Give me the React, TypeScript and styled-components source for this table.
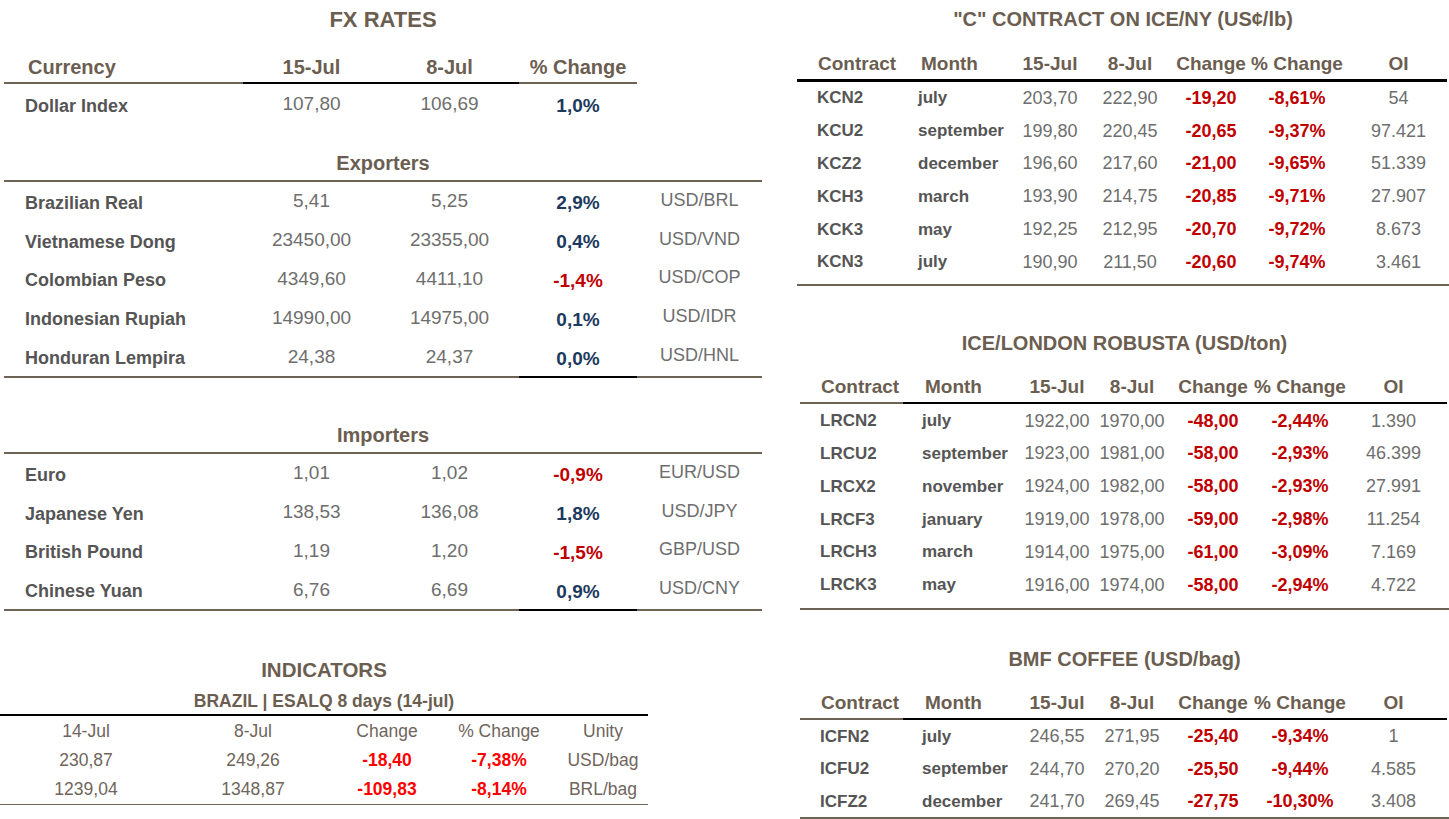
import styled, { createGlobalStyle } from "styled-components";

const BROWN = "#6b5e51";
const INK = "#555555";
const GREY = "#6e6e6e";
const RED = "#c00000";
const BRIGHT_RED = "#ff0000";
const NAVY = "#1c3a5e";
const LINE = "#6f6356";

const GlobalStyle = createGlobalStyle`
  html, body { margin: 0; padding: 0; background: #ffffff; }
  body { font-family: "Liberation Sans", Arial, sans-serif; }
`;

const Page = styled.div`
  display: flex;
  width: 1449px;
  height: 819px;
  overflow: hidden;
`;

const LeftCol = styled.div`
  width: 770px;
  flex: none;
  display: flex;
  flex-direction: column;
`;

const RightCol = styled.div`
  width: 652px;
  margin-left: 27px;
  flex: none;
  display: flex;
  flex-direction: column;
`;

const Title = styled.div<{ $h: number; $mt?: number; $size?: number }>`
  height: ${(p) => p.$h}px;
  line-height: ${(p) => p.$h}px;
  margin-top: ${(p) => p.$mt ?? 0}px;
  text-align: center;
  font-weight: 700;
  font-size: ${(p) => p.$size ?? 20}px;
  color: ${BROWN};
  white-space: nowrap;
`;

const SectionTitle = styled(Title)`
  border-bottom: 2px solid ${LINE};
`;

const Rule = styled.div`
  display: flex;
`;

const Seg = styled.div<{ $w: number; $c: string; $t?: number }>`
  flex: none;
  width: ${(p) => p.$w}px;
  height: ${(p) => p.$t ?? 2}px;
  background: ${(p) => p.$c};
`;

/* ---------- FX ---------- */

const FxBlock = styled.div`
  margin-left: 4px;
  width: 758px;
  display: flex;
  flex-direction: column;
`;

const FxRow = styled.div<{ $h: number; $pt?: number; $mt?: number }>`
  display: grid;
  grid-template-columns: 239px 137px 139px 118px 125px;
  box-sizing: border-box;
  height: ${(p) => p.$h}px;
  padding-top: ${(p) => p.$pt ?? 0}px;
  margin-top: ${(p) => p.$mt ?? 0}px;
  align-items: center;
`;

const Cell = styled.div<{ $left?: boolean; $pl?: number; $up?: number }>`
  display: flex;
  justify-content: ${(p) => (p.$left ? "flex-start" : "center")};
  padding-left: ${(p) => p.$pl ?? 0}px;
  padding-bottom: ${(p) => p.$up ?? 0}px;
  min-width: 0;
  white-space: nowrap;
`;

const HeadCell = styled(Cell)<{ $size?: number }>`
  font-weight: 700;
  font-size: ${(p) => p.$size ?? 20}px;
  color: ${BROWN};
`;

const NameCell = styled(Cell)`
  font-weight: 700;
  font-size: 18px;
  color: ${INK};
`;

const NumCell = styled(Cell)<{ $size?: number }>`
  font-size: ${(p) => p.$size ?? 19}px;
  color: ${GREY};
`;

const PctCell = styled(Cell)<{ $neg: boolean }>`
  font-weight: 700;
  font-size: 19px;
  color: ${(p) => (p.$neg ? RED : NAVY)};
`;

const PairCell = styled(Cell)`
  font-size: 18px;
  color: ${GREY};
`;

type Fx = [string, string, string, string, string?];

const dollar: Fx = ["Dollar Index", "107,80", "106,69", "1,0%"];

const exporters: Fx[] = [
  ["Brazilian Real", "5,41", "5,25", "2,9%", "USD/BRL"],
  ["Vietnamese Dong", "23450,00", "23355,00", "0,4%", "USD/VND"],
  ["Colombian Peso", "4349,60", "4411,10", "-1,4%", "USD/COP"],
  ["Indonesian Rupiah", "14990,00", "14975,00", "0,1%", "USD/IDR"],
  ["Honduran Lempira", "24,38", "24,37", "0,0%", "USD/HNL"],
];

const importers: Fx[] = [
  ["Euro", "1,01", "1,02", "-0,9%", "EUR/USD"],
  ["Japanese Yen", "138,53", "136,08", "1,8%", "USD/JPY"],
  ["British Pound", "1,19", "1,20", "-1,5%", "GBP/USD"],
  ["Chinese Yuan", "6,76", "6,69", "0,9%", "USD/CNY"],
];

function FxLine({ row, h, pt }: { row: Fx; h: number; pt?: number }) {
  return (
    <FxRow $h={h} $pt={pt}>
      <NameCell $left $pl={21}>{row[0]}</NameCell>
      <NumCell $up={4}>{row[1]}</NumCell>
      <NumCell $up={4}>{row[2]}</NumCell>
      <PctCell $neg={row[3].startsWith("-")}>{row[3]}</PctCell>
      {row[4] ? <PairCell $up={6}>{row[4]}</PairCell> : <span />}
    </FxRow>
  );
}

function SectionRule() {
  return (
    <Rule>
      <Seg $w={515} $c={LINE} />
      <Seg $w={118} $c="#000" />
      <Seg $w={125} $c={LINE} />
    </Rule>
  );
}

/* ---------- Indicators ---------- */

const IndBlock = styled.div`
  width: 648px;
  display: flex;
  flex-direction: column;
`;

const SubTitle = styled.div`
  height: 25px;
  line-height: 25px;
  text-align: center;
  font-weight: 700;
  font-size: 17.5px;
  color: ${BROWN};
  border-bottom: 2px solid #000;
`;

const IndRow = styled.div<{ $h: number; $last?: boolean }>`
  display: grid;
  grid-template-columns: 172px 162px 106px 118px 90px;
  height: ${(p) => p.$h}px;
  align-items: center;
  border-bottom: ${(p) => (p.$last ? `1.5px solid ${LINE}` : "none")};
`;

const IndHead = styled(Cell)`
  font-size: 17.5px;
  color: #6f655c;
`;

const IndRed = styled(Cell)`
  font-weight: 700;
  font-size: 17.5px;
  color: ${BRIGHT_RED};
`;

/* ---------- Contracts ---------- */

const TableBlock = styled.div<{ $ml?: number; $mt: number }>`
  margin-left: ${(p) => p.$ml ?? 0}px;
  margin-top: ${(p) => p.$mt}px;
  display: flex;
  flex-direction: column;
`;

const CRow = styled.div<{ $cols: string; $h: number; $mt?: number; $pt?: number }>`
  display: grid;
  grid-template-columns: ${(p) => p.$cols};
  box-sizing: border-box;
  height: ${(p) => p.$h}px;
  margin-top: ${(p) => p.$mt ?? 0}px;
  padding-top: ${(p) => p.$pt ?? 0}px;
  align-items: center;
`;

const CodeCell = styled(Cell)`
  font-weight: 700;
  font-size: 17px;
  color: ${INK};
`;

const ChgCell = styled(Cell)`
  font-weight: 700;
  font-size: 18px;
  color: ${RED};
`;

const Bottom = styled.div<{ $pb: number }>`
  margin-top: ${(p) => p.$pb}px;
  height: 1.5px;
  background: ${LINE};
`;

type Contract = [string, string, string, string, string, string, string];

const iceNy: Contract[] = [
  ["KCN2", "july", "203,70", "222,90", "-19,20", "-8,61%", "54"],
  ["KCU2", "september", "199,80", "220,45", "-20,65", "-9,37%", "97.421"],
  ["KCZ2", "december", "196,60", "217,60", "-21,00", "-9,65%", "51.339"],
  ["KCH3", "march", "193,90", "214,75", "-20,85", "-9,71%", "27.907"],
  ["KCK3", "may", "192,25", "212,95", "-20,70", "-9,72%", "8.673"],
  ["KCN3", "july", "190,90", "211,50", "-20,60", "-9,74%", "3.461"],
];

const robusta: Contract[] = [
  ["LRCN2", "july", "1922,00", "1970,00", "-48,00", "-2,44%", "1.390"],
  ["LRCU2", "september", "1923,00", "1981,00", "-58,00", "-2,93%", "46.399"],
  ["LRCX2", "november", "1924,00", "1982,00", "-58,00", "-2,93%", "27.991"],
  ["LRCF3", "january", "1919,00", "1978,00", "-59,00", "-2,98%", "11.254"],
  ["LRCH3", "march", "1914,00", "1975,00", "-61,00", "-3,09%", "7.169"],
  ["LRCK3", "may", "1916,00", "1974,00", "-58,00", "-2,94%", "4.722"],
];

const bmf: Contract[] = [
  ["ICFN2", "july", "246,55", "271,95", "-25,40", "-9,34%", "1"],
  ["ICFU2", "september", "244,70", "270,20", "-25,50", "-9,44%", "4.585"],
  ["ICFZ2", "december", "241,70", "269,45", "-27,75", "-10,30%", "3.408"],
];

const NY_COLS = "115px 106px 64px 96px 66px 106px 97px";
const LDN_COLS = "114px 102px 82px 68px 94px 80px 107px";

type TableProps = {
  title: string;
  rows: Contract[];
  cols: string;
  monthPad: number;
  ml?: number;
  mt: number;
  headMt: number;
  rowH: number;
  pb: number;
  split?: boolean;
};

function ContractTable({ title, rows, cols, monthPad, ml, mt, headMt, rowH, pb, split }: TableProps) {
  const width = ml ? 647 : 650;
  return (
    <TableBlock $ml={ml} $mt={mt}>
      <Title $h={36} $size={20}>{title}</Title>
      <CRow $cols={cols} $h={30} $mt={headMt}>
        <HeadCell $left $pl={21} $size={19}>Contract</HeadCell>
        <HeadCell $left $pl={monthPad + 3} $size={19}>Month</HeadCell>
        <HeadCell $size={19}>15-Jul</HeadCell>
        <HeadCell $size={19}>8-Jul</HeadCell>
        <HeadCell $size={19}>Change</HeadCell>
        <HeadCell $size={19}>% Change</HeadCell>
        <HeadCell $size={19}>OI</HeadCell>
      </CRow>
      <Rule>
        {split ? (
          <>
            <Seg $w={103} $c={LINE} $t={2.5} />
            <Seg $w={width - 103} $c="#000" $t={2.5} />
          </>
        ) : (
          <Seg $w={width} $c="#000" $t={2.5} />
        )}
      </Rule>
      {rows.map((r) => (
        <CRow key={r[0]} $cols={cols} $h={rowH} $pt={1}>
          <CodeCell $left $pl={20}>{r[0]}</CodeCell>
          <CodeCell $left $pl={monthPad}>{r[1]}</CodeCell>
          <NumCell $size={18}>{r[2]}</NumCell>
          <NumCell $size={18}>{r[3]}</NumCell>
          <ChgCell>{r[4]}</ChgCell>
          <ChgCell>{r[5]}</ChgCell>
          <NumCell $size={18}>{r[6]}</NumCell>
        </CRow>
      ))}
      <Bottom $pb={pb} />
    </TableBlock>
  );
}

export default function App() {
  return (
    <>
      <GlobalStyle />
      <Page>
        <LeftCol>
          <FxBlock>
            <Title $h={40} $size={22}>FX RATES</Title>
            <FxRow $h={30} $mt={12}>
              <HeadCell $left $pl={24}>Currency</HeadCell>
              <HeadCell>15-Jul</HeadCell>
              <HeadCell>8-Jul</HeadCell>
              <HeadCell>% Change</HeadCell>
              <span />
            </FxRow>
            <Rule>
              <Seg $w={239} $c={LINE} />
              <Seg $w={276} $c="#000" />
              <Seg $w={118} $c={LINE} />
            </Rule>
            <FxLine row={dollar} h={42} pt={2} />

            <SectionTitle $h={34} $mt={20}>Exporters</SectionTitle>
            {exporters.map((r) => (
              <FxLine key={r[0]} row={r} h={38.8} pt={4} />
            ))}
            <SectionRule />

            <SectionTitle $h={34} $mt={40}>Importers</SectionTitle>
            {importers.map((r) => (
              <FxLine key={r[0]} row={r} h={38.8} pt={4} />
            ))}
            <SectionRule />
          </FxBlock>

          <IndBlock>
            <Title $h={38} $mt={40} $size={20.5}>INDICATORS</Title>
            <SubTitle>BRAZIL | ESALQ 8 days (14-jul)</SubTitle>
            <IndRow $h={30}>
              <IndHead>14-Jul</IndHead>
              <IndHead>8-Jul</IndHead>
              <IndHead>Change</IndHead>
              <IndHead>% Change</IndHead>
              <IndHead>Unity</IndHead>
            </IndRow>
            <IndRow $h={29}>
              <IndHead>230,87</IndHead>
              <IndHead>249,26</IndHead>
              <IndRed>-18,40</IndRed>
              <IndRed>-7,38%</IndRed>
              <IndHead>USD/bag</IndHead>
            </IndRow>
            <IndRow $h={29} $last>
              <IndHead>1239,04</IndHead>
              <IndHead>1348,87</IndHead>
              <IndRed>-109,83</IndRed>
              <IndRed>-8,14%</IndRed>
              <IndHead>BRL/bag</IndHead>
            </IndRow>
          </IndBlock>
        </LeftCol>

        <RightCol>
          <ContractTable
            title={'"C" CONTRACT ON ICE/NY (US¢/lb)'}
            rows={iceNy}
            cols={NY_COLS}
            monthPad={6}
            mt={1}
            headMt={12}
            rowH={32.8}
            pb={6}
          />
          <ContractTable
            title="ICE/LONDON ROBUSTA (USD/ton)"
            rows={robusta}
            cols={LDN_COLS}
            monthPad={8}
            ml={3}
            mt={39}
            headMt={11}
            rowH={32.8}
            pb={7}
            split
          />
          <ContractTable
            title="BMF COFFEE (USD/bag)"
            rows={bmf}
            cols={LDN_COLS}
            monthPad={8}
            ml={3}
            mt={31}
            headMt={11}
            rowH={32.4}
            pb={0}
            split
          />
        </RightCol>
      </Page>
    </>
  );
}
